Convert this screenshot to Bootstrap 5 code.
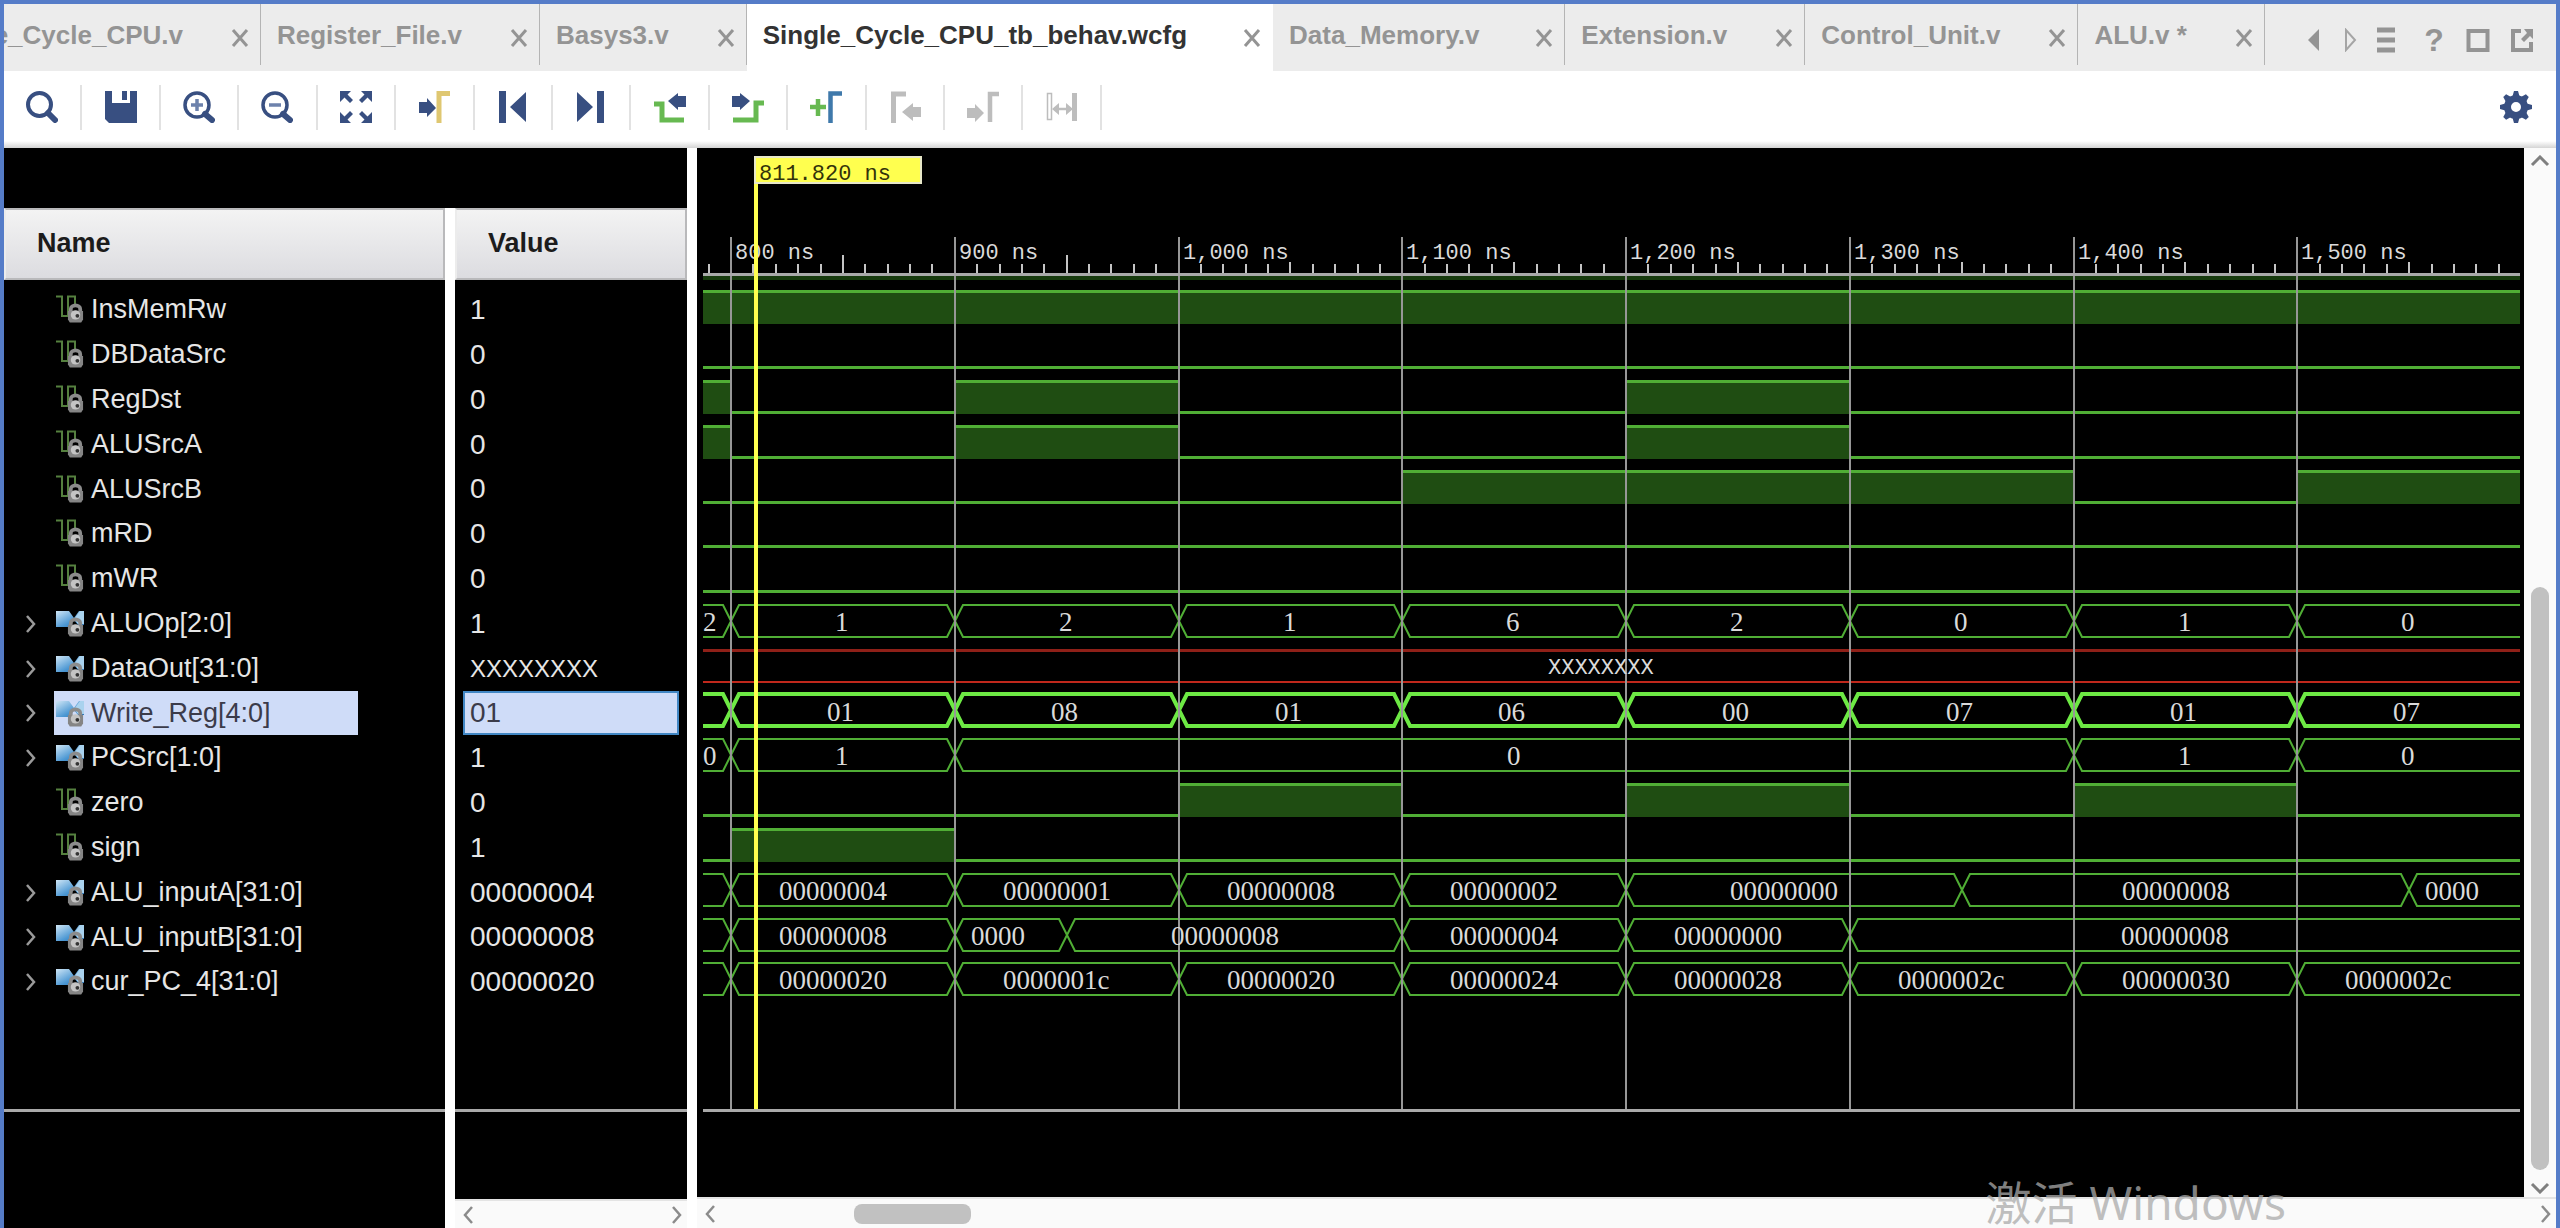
<!DOCTYPE html>
<html lang="en">
<head>
<meta charset="utf-8">
<meta name="viewport" content="width=device-width, initial-scale=1">
<title>Single_Cycle_CPU_tb_behav.wcfg</title>
<link href="https://cdn.jsdelivr.net/npm/bootstrap@5.3.0/dist/css/bootstrap.min.css" rel="stylesheet">
<style>
  body { font-family: "Liberation Sans", sans-serif; font-size: 27px; line-height: 32px; color: #e6e6e6; background: #fff; }
  .frame { border: 4px solid #557cc8; border-bottom: 0; }
  .icon-btn { background: none; border: 0; padding: 0; display: flex; align-items: center; justify-content: center; color: inherit; }
  svg { display: block; flex: none; }

  .tabbar { height: 67px; background: #ececec; color: #949494; font-weight: 700; font-size: 26px; }
  .file-tab { display: flex; flex: none; height: 67px; padding: 0 12px 5px 16px; gap: 48px; align-items: center; position: relative; white-space: nowrap; }
  .file-tab.roomy { gap: 56px; }
  .file-tab a { color: inherit; text-decoration: none; }
  .file-tab:not(.current)::after { content: ""; position: absolute; right: 0; top: 0; width: 1px; height: 61px; background: #b4b4b4; }
  .file-tab.current { background: #fff; color: #333; }
  .file-tab.clipped { width: 257px; overflow: hidden; justify-content: flex-end; }
  .file-tab .icon-btn { color: #949494; padding-top: 6px; }
  .nav-btn { width: 36px; }
  .win-btn { width: 44px; }
  .help-btn { font-weight: 700; font-size: 32px; }

  .toolbar { height: 77px; padding-bottom: 5px; background: linear-gradient(#fff 0 70px, #d4d4d4 77px); color: #384f81; }
  .tools { width: 1098px; }
  .tools .icon-btn { flex: 1 1 0; height: 45px; border-right: 2px solid #e2e2e2; }
  .tools .icon-btn:disabled { color: #bdbdbd; }

  .signals { width: 693px; border-right: 10px solid #fff; background: #000; }
  .signals-top { height: 60px; }
  .sig-table { table-layout: fixed; border-collapse: separate; border-spacing: 0; width: 683px; }
  .sig-table th, .sig-table td { padding: 0; }
  .sig-table .c-name { width: 451px; border-right: 10px solid #fff; }
  .col-head { height: 72px; margin-bottom: 7px; padding-left: 31px; line-height: 67px; color: #1c1c1c; background: linear-gradient(#f3f3f3, #dcdce0); border: 2px solid #b9b9bb; border-left-color: #ececec; }
  .sig-table tbody td { height: 45px; }
  .sig-table tbody tr:nth-child(5n) td { height: 44px; }
  .expander { width: 50px; color: #9a9a9a; }
  .sig-name { width: 304px; height: 44px; padding: 0 0 1px 2px; gap: 7px; }
  .sig-value { height: 44px; margin: 0 8px; padding-left: 5px; border: 2px solid transparent; line-height: 39px; font-size: 28px; }
  .sig-value.unknown { font-size: 24px; }
  .picked .sig-name { background: #cfdcf8; color: #3b3b4a; }
  .picked .sig-value { background: #cfdcf8; color: #3b3b4a; border-color: #4287c4; }
  .name-pane { width: 451px; border-right: 10px solid #fff; }
  .list-end { height: 108px; border-bottom: 3px solid #a9a9a9; }

  .hbar { height: 31px; background: #fafafa; border-top: 2px solid #e4e4e4; color: #8b8b8b; }
  .hbar.short { height: 29px; }
  .hthumb { width: 117px; height: 20px; border-radius: 8px; background: #c1c1c1; margin-left: 133px; }
  .vbar { width: 32px; background: #fafafa; color: #7f7f7f; padding: 7px 0 3px; }
  .vthumb { width: 18px; border-radius: 9px; background: #c1c1c1; flex: 580 0 0; }
  .vgap { flex: 418 0 0; }
  .vgap-end { flex: 12 0 0; }

  .wave-pane { min-width: 0; background: #000; }
  .wave-view { position: relative; overflow: hidden; min-height: 0; }
  .wave-view svg { position: absolute; left: 0; top: 0; width: 100%; height: 100%; }
  .t-mono { font: 22px "Liberation Mono", monospace; fill: #dadada; }
  .t-hex { font: 27px "Liberation Serif", serif; fill: #dadada; }
  .t-cursor { fill: #33330a; }
  .watermark { position: absolute; right: 270px; bottom: 3px; font: 46px/46px "Noto Sans", "Noto Sans CJK SC", sans-serif; color: rgba(170,170,170,.75); white-space: nowrap; pointer-events: none; }
</style>
</head>
<body>
<svg width="0" height="0" class="position-absolute" aria-hidden="true">
  <defs>
    <linearGradient id="blueFace" x1="0" y1="0" x2="1" y2="1"><stop offset="0" stop-color="#cfe6f6"/><stop offset=".6" stop-color="#4b97d3"/><stop offset="1" stop-color="#2c6fae"/></linearGradient>
    <symbol id="i-x" viewBox="0 0 18 18"><path d="M2 1L16 17M16 1L2 17" stroke="currentColor" stroke-width="3" fill="none"/></symbol>
    <symbol id="i-lock" viewBox="0 0 18 20"><path d="M4 10V6a5 4 0 0 1 10 0v4" fill="none" stroke="#8c8c8c" stroke-width="4"/><path d="M1 8h16v9l-2 3H3l-2-3z" fill="#858585"/><circle cx="9" cy="12" r="5" fill="#c4c4c4"/><circle cx="11" cy="13" r="2" fill="#333"/></symbol>
    <symbol id="i-bit" viewBox="0 0 28 28"><path d="M0 1.500h6V21h6V1.500h7V10" fill="none" stroke="#55803f" stroke-width="2"/><use href="#i-lock" x="11" y="8" width="17" height="20"/></symbol>
    <symbol id="i-bus" viewBox="0 0 28 28"><path d="M0 2h13l5 7 5-7h5v14h-6l-4-5-5 7H0z" fill="url(#blueFace)"/><path d="M28 2h-4l-6 8 4 5h6z" fill="#a9d2ee"/><use href="#i-lock" x="11" y="8" width="17" height="20"/></symbol>
    <symbol id="i-right" viewBox="0 0 12 20"><path d="M2 2L9 10L2 18" fill="none" stroke="currentColor" stroke-width="2.500"/></symbol>
    <symbol id="i-left" viewBox="0 0 12 20"><path d="M9 2L2 10L9 18" fill="none" stroke="currentColor" stroke-width="2.500"/></symbol>
  </defs>
</svg>

<div class="frame d-flex flex-column vh-100 overflow-hidden">
  <nav class="tabbar d-flex" aria-label="Open files">
    <div class="file-tab clipped"><a href="#">Single_Cycle_CPU.v</a><button class="icon-btn" aria-label="Close"><svg width="18" height="18"><use href="#i-x"/></svg></button></div>
    <div class="file-tab"><a href="#">Register_File.v</a><button class="icon-btn" aria-label="Close"><svg width="18" height="18"><use href="#i-x"/></svg></button></div>
    <div class="file-tab"><a href="#">Basys3.v</a><button class="icon-btn" aria-label="Close"><svg width="18" height="18"><use href="#i-x"/></svg></button></div>
    <div class="file-tab current roomy"><a href="#">Single_Cycle_CPU_tb_behav.wcfg</a><button class="icon-btn" aria-label="Close"><svg width="18" height="18"><use href="#i-x"/></svg></button></div>
    <div class="file-tab roomy"><a href="#">Data_Memory.v</a><button class="icon-btn" aria-label="Close"><svg width="18" height="18"><use href="#i-x"/></svg></button></div>
    <div class="file-tab"><a href="#">Extension.v</a><button class="icon-btn" aria-label="Close"><svg width="18" height="18"><use href="#i-x"/></svg></button></div>
    <div class="file-tab"><a href="#">Control_Unit.v</a><button class="icon-btn" aria-label="Close"><svg width="18" height="18"><use href="#i-x"/></svg></button></div>
    <div class="file-tab"><a href="#">ALU.v *</a><button class="icon-btn" aria-label="Close"><svg width="18" height="18"><use href="#i-x"/></svg></button></div>
    <div class="d-flex ms-auto me-2 pe-1 pt-1">
      <button class="icon-btn nav-btn" aria-label="Previous tab"><svg width="24" height="24"><path d="M17 1v22L6 12z" fill="#949494"/></svg></button>
      <button class="icon-btn nav-btn" aria-label="Next tab"><svg width="24" height="24"><path d="M8 2v20l9-10z" fill="none" stroke="#a5a5a5" stroke-width="2"/></svg></button>
      <button class="icon-btn nav-btn" aria-label="Tab list"><svg width="24" height="26"><path d="M3 3h18M3 13h18M3 23h18" stroke="#949494" stroke-width="5"/></svg></button>
      <button class="icon-btn win-btn help-btn ms-2" aria-label="Help">?</button>
      <button class="icon-btn win-btn" aria-label="Maximize"><svg width="24" height="24"><rect x="2.500" y="3" width="19" height="19" fill="none" stroke="#949494" stroke-width="4"/></svg></button>
      <button class="icon-btn win-btn" aria-label="Float"><svg width="24" height="24"><path d="M11 3H3v19h18V14" fill="none" stroke="#949494" stroke-width="4"/><path d="M14 1h9v10l-3-3-6 6-3-3 6-6z" fill="#949494"/></svg></button>
    </div>
  </nav>

  <div class="toolbar d-flex align-items-center flex-shrink-0">
    <div class="tools d-flex">
      <button class="icon-btn" aria-label="Search"><svg width="32" height="32"><circle cx="13.500" cy="13.500" r="11.500" fill="none" stroke="currentColor" stroke-width="4"/><path d="M22 22l7 7" stroke="currentColor" stroke-width="6" stroke-linecap="round"/></svg></button>
      <button class="icon-btn" aria-label="Save"><svg width="32" height="32"><path d="M0 0h7v12h18V0h7v32H4l-4-4z" fill="currentColor"/><path d="M17 0h5v9h-5z" fill="currentColor"/></svg></button>
      <button class="icon-btn" aria-label="Zoom in"><svg width="32" height="32"><circle cx="14" cy="14" r="12" fill="none" stroke="currentColor" stroke-width="3.500"/><path d="M22 23l7 6" stroke="currentColor" stroke-width="6" stroke-linecap="round"/><path d="M8 14h12M14 8v12" stroke="#6d82ac" stroke-width="3.500"/></svg></button>
      <button class="icon-btn" aria-label="Zoom out"><svg width="32" height="32"><circle cx="14" cy="14" r="12" fill="none" stroke="currentColor" stroke-width="3.500"/><path d="M22 23l7 6" stroke="currentColor" stroke-width="6" stroke-linecap="round"/><path d="M8 14h12" stroke="#6d82ac" stroke-width="3.500"/></svg></button>
      <button class="icon-btn" aria-label="Zoom fit"><svg width="32" height="32"><g fill="currentColor"><path d="M0 0h11l-3.500 3.500L13 9l-3 3-5.500-5.500L0 11z"/><path d="M32 0H21l3.500 3.500L19 9l3 3 5.500-5.500L32 11z"/><path d="M0 32h11l-3.500-3.500L13 23l-3-3-5.500 5.500L0 21z"/><path d="M32 32H21l3.500-3.500L19 23l3-3 5.500 5.500L32 21z"/></g></svg></button>
      <button class="icon-btn" aria-label="Go to cursor"><svg width="32" height="32"><path d="M1 11h8V7l9 10-9 9v-4H1z" fill="currentColor"/><path d="M21 32V2.500h11" fill="none" stroke="#dfc771" stroke-width="5"/></svg></button>
      <button class="icon-btn" aria-label="Go to start"><svg width="32" height="32"><path d="M2 0h7v32H2zM29 1v30L13 16z" fill="currentColor"/></svg></button>
      <button class="icon-btn" aria-label="Go to end"><svg width="32" height="32"><path d="M22 0h7v32h-7zM2 1v30l16-15z" fill="currentColor"/></svg></button>
      <button class="icon-btn" aria-label="Previous transition"><svg width="32" height="32"><path d="M0 13h8v16h22" fill="none" stroke="#67b951" stroke-width="5"/><path d="M32 5v11h-8v3L14 10l10-8v3z" fill="currentColor"/></svg></button>
      <button class="icon-btn" aria-label="Next transition"><svg width="32" height="32"><path d="M32 12h-8v17H1" fill="none" stroke="#67b951" stroke-width="5"/><path d="M0 5v11h8v3l10-9L8 2v3z" fill="currentColor"/></svg></button>
      <button class="icon-btn" aria-label="Add marker"><svg width="32" height="32"><path d="M0 16h16M8 8v17" stroke="#67b951" stroke-width="4.500"/><path d="M20.500 32V2.500H32" fill="none" stroke="#3f79ab" stroke-width="4.500"/></svg></button>
      <button class="icon-btn" aria-label="Previous marker" disabled><svg width="32" height="32"><path d="M4.500 32V3H17" fill="none" stroke="currentColor" stroke-width="5"/><path d="M32 16v10h-8v4l-11-9 11-9v4z" fill="currentColor"/></svg></button>
      <button class="icon-btn" aria-label="Next marker" disabled><svg width="32" height="32"><path d="M23 31V3h9" fill="none" stroke="currentColor" stroke-width="4.500"/><path d="M0 17v10h8v4l9-9-9-9v4z" fill="currentColor"/></svg></button>
      <button class="icon-btn" aria-label="Swap cursors" disabled><svg width="32" height="32"><path d="M1.500 2.500h4v26h-4z" fill="none" stroke="currentColor" stroke-width="1.500"/><path d="M28.500 2v28" stroke="currentColor" stroke-width="5"/><path d="M9 18h15" stroke="currentColor" stroke-width="2.500"/><path d="M13 12v12l-7-6zM20 12v12l7-6z" fill="currentColor"/></svg></button>
    </div>
    <button class="icon-btn ms-auto me-4" aria-label="Settings"><svg width="32" height="32" viewBox="-16 -16 32 32"><g fill="currentColor"><path d="M-4-9L-2-16H2L4-9z"/><path d="M-4-9L-2-16H2L4-9z" transform="rotate(45)"/><path d="M-4-9L-2-16H2L4-9z" transform="rotate(90)"/><path d="M-4-9L-2-16H2L4-9z" transform="rotate(135)"/><path d="M-4-9L-2-16H2L4-9z" transform="rotate(180)"/><path d="M-4-9L-2-16H2L4-9z" transform="rotate(225)"/><path d="M-4-9L-2-16H2L4-9z" transform="rotate(270)"/><path d="M-4-9L-2-16H2L4-9z" transform="rotate(315)"/></g><circle r="8.500" fill="none" stroke="currentColor" stroke-width="7"/></svg></button>
  </div>

  <main class="d-flex flex-grow-1 overflow-hidden">
    <section class="signals d-flex flex-column flex-shrink-0">
      <div class="signals-top flex-shrink-0"></div>
      <table class="sig-table flex-shrink-0">
        <thead><tr><th class="c-name" scope="col"><div class="col-head">Name</div></th><th scope="col"><div class="col-head">Value</div></th></tr></thead>
        <tbody id="sigRows"></tbody>
      </table>
      <div class="d-flex flex-grow-1">
        <div class="name-pane"><div class="list-end"></div></div>
        <div class="flex-grow-1 d-flex flex-column">
          <div class="list-end flex-shrink-0"></div>
          <div class="hbar short d-flex align-items-center justify-content-between mt-auto px-1">
            <button class="icon-btn px-1" aria-label="Scroll left"><svg width="12" height="20"><use href="#i-left"/></svg></button>
            <button class="icon-btn" aria-label="Scroll right"><svg width="12" height="20"><use href="#i-right"/></svg></button>
          </div>
        </div>
      </div>
    </section>

    <section class="wave-pane flex-grow-1 d-flex flex-column position-relative">
      <div class="d-flex flex-grow-1">
        <div class="wave-view flex-grow-1"><svg id="wave" role="img" aria-label="Waveforms"></svg></div>
        <div class="vbar d-flex flex-column align-items-center">
          <button class="icon-btn" aria-label="Scroll up"><svg width="20" height="12"><path d="M2 10L10 2L18 10" fill="none" stroke="currentColor" stroke-width="3"/></svg></button>
          <div class="vgap"></div>
          <div class="vthumb"></div>
          <div class="vgap-end"></div>
          <button class="icon-btn" aria-label="Scroll down"><svg width="20" height="12"><path d="M2 2L10 10L18 2" fill="none" stroke="currentColor" stroke-width="3"/></svg></button>
        </div>
      </div>
      <div class="hbar d-flex align-items-center px-1">
        <button class="icon-btn px-1" aria-label="Scroll left"><svg width="12" height="20"><use href="#i-left"/></svg></button>
        <div class="hthumb"></div>
        <button class="icon-btn ms-auto" aria-label="Scroll right"><svg width="12" height="20"><use href="#i-right"/></svg></button>
      </div>
      <div class="watermark">激活 Windows</div>
    </section>
  </main>
</div>

<script src="https://cdn.jsdelivr.net/npm/bootstrap@5.3.0/dist/js/bootstrap.bundle.min.js"></script>
<script>
// Bit signals list [start, end] intervals where the level is 1; buses list [start, text].
const signals = [
  { name: 'InsMemRw', value: '1', high: [[0, 9999]] },
  { name: 'DBDataSrc', value: '0', high: [] },
  { name: 'RegDst', value: '0', high: [[0, 800], [900, 1000], [1200, 1300]] },
  { name: 'ALUSrcA', value: '0', high: [[0, 800], [900, 1000], [1200, 1300]] },
  { name: 'ALUSrcB', value: '0', high: [[1100, 1400], [1500, 9999]] },
  { name: 'mRD', value: '0', high: [] },
  { name: 'mWR', value: '0', high: [] },
  { name: 'ALUOp[2:0]', value: '1', bus: [[0, '2'], [800, '1'], [900, '2'], [1000, '1'], [1100, '6'], [1200, '2'], [1300, '0'], [1400, '1'], [1500, '0']] },
  { name: 'DataOut[31:0]', value: 'XXXXXXXX', unknown: true, bus: [[0, 'XXXXXXXX']] },
  { name: 'Write_Reg[4:0]', value: '01', picked: true, bus: [[0, ''], [800, '01'], [900, '08'], [1000, '01'], [1100, '06'], [1200, '00'], [1300, '07'], [1400, '01'], [1500, '07']] },
  { name: 'PCSrc[1:0]', value: '1', bus: [[0, '0'], [800, '1'], [900, '0'], [1400, '1'], [1500, '0']] },
  { name: 'zero', value: '0', high: [[1000, 1100], [1200, 1300], [1400, 1500]] },
  { name: 'sign', value: '1', high: [[800, 900]] },
  { name: 'ALU_inputA[31:0]', value: '00000004', bus: [[0, ''], [800, '00000004'], [900, '00000001'], [1000, '00000008'], [1100, '00000002'], [1200, '00000000'], [1350, '00000008'], [1550, '0000']] },
  { name: 'ALU_inputB[31:0]', value: '00000008', bus: [[0, ''], [800, '00000008'], [900, '0000'], [950, '00000008'], [1100, '00000004'], [1200, '00000000'], [1300, '00000008']] },
  { name: 'cur_PC_4[31:0]', value: '00000020', bus: [[0, ''], [800, '00000020'], [900, '0000001c'], [1000, '00000020'], [1100, '00000024'], [1200, '00000028'], [1300, '0000002c'], [1400, '00000030'], [1500, '0000002c']] }
];

document.getElementById('sigRows').innerHTML = signals.map(s => `
  <tr class="${s.picked ? 'picked' : ''}">
    <td class="c-name"><div class="d-flex align-items-center">
      ${s.bus ? '<button class="icon-btn expander ps-1" aria-label="Expand"><svg width="12" height="20"><use href="#i-right"/></svg></button>' : '<span class="expander"></span>'}
      <div class="sig-name d-flex align-items-center"><svg width="28" height="28"><use href="#${s.bus ? 'i-bus' : 'i-bit'}"/></svg><span>${s.name}</span></div>
    </div></td>
    <td><div class="sig-value ${s.unknown ? 'unknown' : ''}">${s.value}</div></td>
  </tr>`).join('');

const svg = document.getElementById('wave');
const PX_PER_NS = 2.2376, X800 = 34, LEFT = 6, ROWS_TOP = 138;
const GREEN = '#50ae35', BRIGHT = '#6de944', FILL = '#1f4d12', GRAY = '#979797';
const tx = t => Math.round(X800 + (t - 800) * PX_PER_NS);

function draw() {
  const right = svg.clientWidth - 4;
  const clamp = x => Math.max(LEFT, Math.min(right, x));
  const rect = (x, y, w, h, c) => `<rect x="${x}" y="${y}" width="${Math.max(0, w)}" height="${h}" fill="${c}"/>`;
  const text = (x, y, cls, s) => `<text x="${x}" y="${y}" class="${cls}">${s}</text>`;
  let out = rect(LEFT, 128, right - LEFT, 4, '#163a0c');
  let labels = '', top = ROWS_TOP;

  signals.forEach((s, i) => {
    if (s.high) {
      let x = LEFT;
      s.high.forEach(([a, b]) => {
        const xa = clamp(tx(a)), xb = clamp(tx(b));
        out += rect(x, top + 35, xa - x, 3, GREEN);
        out += rect(xa, top + 5, xb - xa, 33, FILL) + rect(xa, top + 4, xb - xa, 3, GREEN);
        x = xb;
      });
      out += rect(x, top + 35, right - x, 3, GREEN);
    } else {
      const w = s.picked ? 4 : 2, y1 = top + (s.picked ? 4 : 5), y2 = top + (s.picked ? 36 : 37);
      s.bus.forEach(([t, label], k) => {
        const last = k === s.bus.length - 1;
        const xa = clamp(tx(t)), xb = last ? right : clamp(tx(s.bus[k + 1][0]));
        const l = k ? xa + 8 : xa, r = last ? xb : xb - 8, mid = (y1 + y2) / 2;
        if (s.unknown) {
          out += rect(l, y1 - 1, r - l, 3, '#8f2018') + rect(l, y2 - 1, r - l, 2, '#c0281c');
        } else {
          const up = `${k ? `M${xa} ${mid}L${l} ${y1}` : `M${l} ${y1}`}H${r}${last ? '' : `L${xb} ${mid}`}`;
          const dn = `${k ? `M${xa} ${mid}L${l} ${y2}` : `M${l} ${y2}`}H${r}${last ? '' : `L${xb} ${mid}`}`;
          out += `<path d="${up}${dn}" fill="none" stroke="${s.picked ? BRIGHT : GREEN}" stroke-width="${w}"/>`;
        }
        if (label) {
          let x = Math.round((xa + xb) / 2 - label.length * 8);
          if (label === '0000') x = xa + 16;
          if (!k && !s.unknown) x = LEFT;
          labels += text(x, top + (s.unknown ? 29 : 31), s.unknown ? 't-mono' : 't-hex', label);
        }
      });
    }
    top += (i + 1) % 5 ? 45 : 44;
  });

  for (let t = 790; tx(t) < right; t += 10) {
    if (t % 100 === 0) {
      out += `<rect x="${tx(t) - 1}" y="89" width="2" height="872" fill="${GRAY}"/>`;
      labels += text(tx(t) + 4, 111, 't-mono', t.toLocaleString('en-US') + ' ns');
    } else {
      const y = t % 50 ? 116 : (t < 1000 ? 107 : 114);
      out += rect(tx(t) - 1, y, 2, 126 - y, '#c4c4c4');
    }
  }
  out += rect(LEFT, 125, right - LEFT, 3, '#a9a9a9') + rect(LEFT, 961, right - LEFT, 3, '#a9a9a9');

  const cx = tx(811.82) - 3;
  out += labels + rect(cx, 9, 4, 952, '#ffff4f');
  out += `<rect x="${cx + 1}" y="9" width="166" height="26" fill="#ffff4f" stroke="#e8e8c8" stroke-width="2"/>`;
  out += text(cx + 5, 32, 't-mono t-cursor', '811.820 ns');
  svg.innerHTML = out;
}
draw();
addEventListener('resize', draw);
</script>
</body>
</html>
